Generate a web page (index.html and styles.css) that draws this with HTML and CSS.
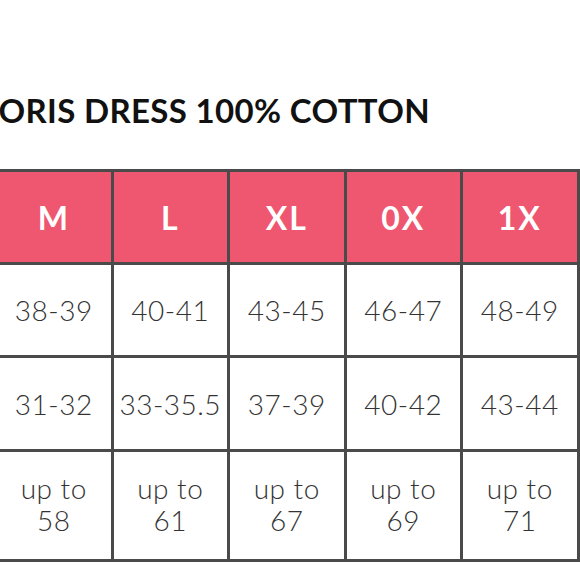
FILE: index.html
```html
<!DOCTYPE html>
<html>
<head>
<meta charset="utf-8">
<link rel="stylesheet" href="styles.css">
</head>
<body>
<div class="page">
  <h1 class="title">DORIS DRESS 100% COTTON</h1>
  <div class="chart">
    <div class="cell head">M</div>
    <div class="cell head">L</div>
    <div class="cell head">XL</div>
    <div class="cell head">0X</div>
    <div class="cell head">1X</div>
    <div class="cell head"></div>

    <div class="cell">38-39</div>
    <div class="cell">40-41</div>
    <div class="cell">43-45</div>
    <div class="cell">46-47</div>
    <div class="cell">48-49</div>
    <div class="cell"></div>

    <div class="cell">31-32</div>
    <div class="cell">33-35.5</div>
    <div class="cell">37-39</div>
    <div class="cell">40-42</div>
    <div class="cell">43-44</div>
    <div class="cell"></div>

    <div class="cell tall">up to<br>58</div>
    <div class="cell tall">up to<br>61</div>
    <div class="cell tall">up to<br>67</div>
    <div class="cell tall">up to<br>69</div>
    <div class="cell tall">up to<br>71</div>
    <div class="cell tall"></div>
  </div>
</div>
</body>
</html>
```
FILE: styles.css
```css
html, body {
  margin: 0;
  padding: 0;
  background: #ffffff;
  overflow: hidden;
}
.page {
  width: 580px;
  height: 580px;
  overflow: hidden;
}
.title {
  margin: 0 0 39px -27px;
  padding-top: 90px;
  font-family: "Lato", "Liberation Sans", sans-serif;
  font-weight: 700;
  font-size: 33px;
  line-height: 40px;
  color: #111111;
  white-space: nowrap;
  letter-spacing: 0.35px;
}
.chart {
  display: grid;
  grid-template-columns: repeat(6, 113.5px);
  grid-template-rows: 90px 90px 91px 107px;
  gap: 3px;
  padding: 3px;
  background: #4a4a4a;
  margin-left: -6px;
  width: max-content;
}
.cell {
  background: #ffffff;
  display: flex;
  align-items: center;
  justify-content: center;
  text-align: center;
  font-family: "Lato", "Liberation Sans", sans-serif;
  font-weight: 300;
  font-size: 28px;
  color: #333333;
  letter-spacing: 0.5px;
}
.head {
  background: #ef566f;
  color: #ffffff;
  font-weight: 700;
  font-size: 32px;
  letter-spacing: 2px;
}
.tall {
  line-height: 32px;
  padding-bottom: 3px;
}
```
